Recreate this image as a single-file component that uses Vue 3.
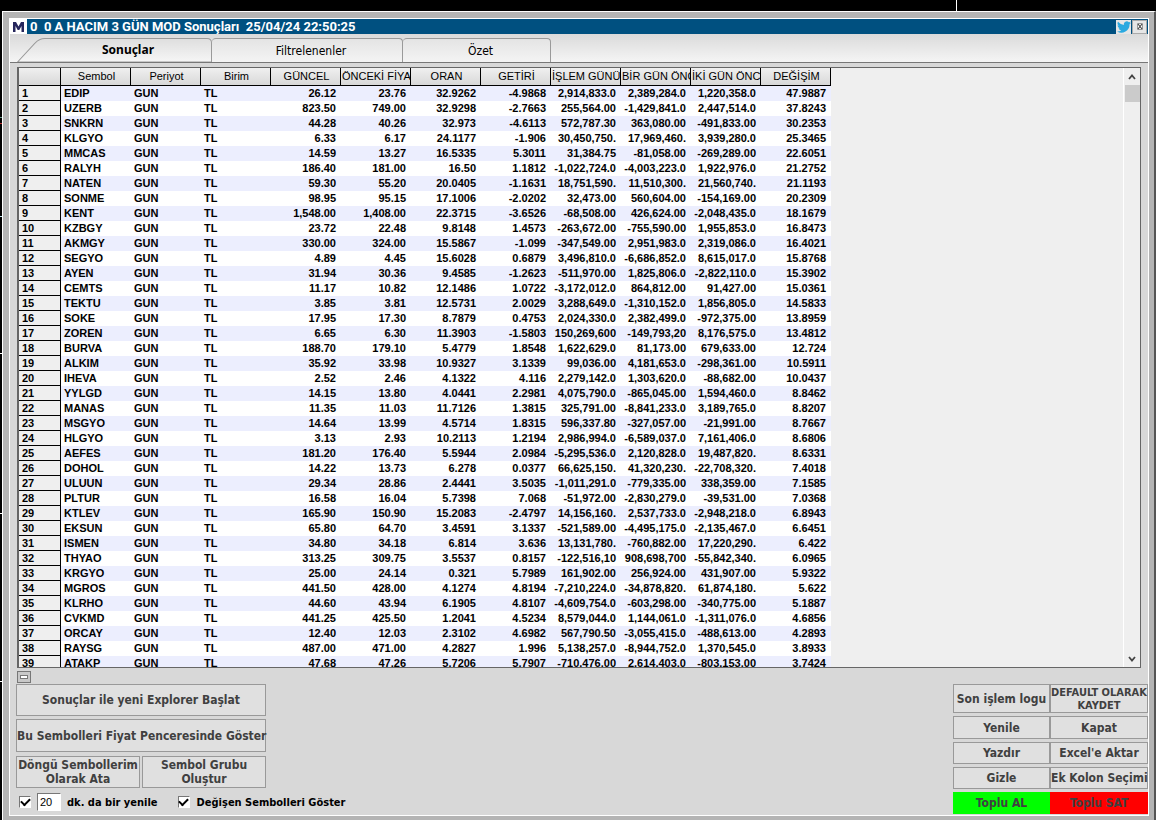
<script setup>
const tabs = ['Sonuçlar', 'Filtrelenenler', 'Özet']
const columns = ['Sembol', 'Periyot', 'Birim', 'GÜNCEL', 'ÖNCEKİ FİYA', 'ORAN', 'GETİRİ', 'İŞLEM GÜNÜ', 'BİR GÜN ÖNC', 'İKİ GÜN ÖNC', 'DEĞİŞİM']
const rows = `EDIP 26.12 23.76 32.9262 -4.9868 2,914,833.0 2,389,284.0 1,220,358.0 47.9887
UZERB 823.50 749.00 32.9298 -2.7663 255,564.00 -1,429,841.0 2,447,514.0 37.8243
SNKRN 44.28 40.26 32.973 -4.6113 572,787.30 363,080.00 -491,833.00 30.2353
KLGYO 6.33 6.17 24.1177 -1.906 30,450,750. 17,969,460. 3,939,280.0 25.3465
MMCAS 14.59 13.27 16.5335 5.3011 31,384.75 -81,058.00 -269,289.00 22.6051
RALYH 186.40 181.00 16.50 1.1812 -1,022,724.0 -4,003,223.0 1,922,976.0 21.2752
NATEN 59.30 55.20 20.0405 -1.1631 18,751,590. 11,510,300. 21,560,740. 21.1193
SONME 98.95 95.15 17.1006 -2.0202 32,473.00 560,604.00 -154,169.00 20.2309
KENT 1,548.00 1,408.00 22.3715 -3.6526 -68,508.00 426,624.00 -2,048,435.0 18.1679
KZBGY 23.72 22.48 9.8148 1.4573 -263,672.00 -755,590.00 1,955,853.0 16.8473
AKMGY 330.00 324.00 15.5867 -1.099 -347,549.00 2,951,983.0 2,319,086.0 16.4021
SEGYO 4.89 4.45 15.6028 0.6879 3,496,810.0 -6,686,852.0 8,615,017.0 15.8768
AYEN 31.94 30.36 9.4585 -1.2623 -511,970.00 1,825,806.0 -2,822,110.0 15.3902
CEMTS 11.17 10.82 12.1486 1.0722 -3,172,012.0 864,812.00 91,427.00 15.0361
TEKTU 3.85 3.81 12.5731 2.0029 3,288,649.0 -1,310,152.0 1,856,805.0 14.5833
SOKE 17.95 17.30 8.7879 0.4753 2,024,330.0 2,382,499.0 -972,375.00 13.8959
ZOREN 6.65 6.30 11.3903 -1.5803 150,269,600 -149,793,20 8,176,575.0 13.4812
BURVA 188.70 179.10 5.4779 1.8548 1,622,629.0 81,173.00 679,633.00 12.724
ALKIM 35.92 33.98 10.9327 3.1339 99,036.00 4,181,653.0 -298,361.00 10.5911
IHEVA 2.52 2.46 4.1322 4.116 2,279,142.0 1,303,620.0 -88,682.00 10.0437
YYLGD 14.15 13.80 4.0441 2.2981 4,075,790.0 -865,045.00 1,594,460.0 8.8462
MANAS 11.35 11.03 11.7126 1.3815 325,791.00 -8,841,233.0 3,189,765.0 8.8207
MSGYO 14.64 13.99 4.5714 1.8315 596,337.80 -327,057.00 -21,991.00 8.7667
HLGYO 3.13 2.93 10.2113 1.2194 2,986,994.0 -6,589,037.0 7,161,406.0 8.6806
AEFES 181.20 176.40 5.5944 2.0984 -5,295,536.0 2,120,828.0 19,487,820. 8.6331
DOHOL 14.22 13.73 6.278 0.0377 66,625,150. 41,320,230. -22,708,320. 7.4018
ULUUN 29.34 28.86 2.4441 3.5035 -1,011,291.0 -779,335.00 338,359.00 7.1585
PLTUR 16.58 16.04 5.7398 7.068 -51,972.00 -2,830,279.0 -39,531.00 7.0368
KTLEV 165.90 150.90 15.2083 -2.4797 14,156,160. 2,537,733.0 -2,948,218.0 6.8943
EKSUN 65.80 64.70 3.4591 3.1337 -521,589.00 -4,495,175.0 -2,135,467.0 6.6451
ISMEN 34.80 34.18 6.814 3.636 13,131,780. -760,882.00 17,220,290. 6.422
THYAO 313.25 309.75 3.5537 0.8157 -122,516,10 908,698,700 -55,842,340. 6.0965
KRGYO 25.00 24.14 0.321 5.7989 161,902.00 256,924.00 431,907.00 5.9322
MGROS 441.50 428.00 4.1274 4.8194 -7,210,224.0 -34,878,820. 61,874,180. 5.622
KLRHO 44.60 43.94 6.1905 4.8107 -4,609,754.0 -603,298.00 -340,775.00 5.1887
CVKMD 441.25 425.50 1.2041 4.5234 8,579,044.0 1,144,061.0 -1,311,076.0 4.6856
ORCAY 12.40 12.03 2.3102 4.6982 567,790.50 -3,055,415.0 -488,613.00 4.2893
RAYSG 487.00 471.00 4.2827 1.996 5,138,257.0 -8,944,752.0 1,370,545.0 3.8933
ATAKP 47.68 47.26 5.7206 5.7907 -710,476.00 2,614,403.0 -803,153.00 3.7424`
  .split('\n')
  .map((line) => {
    const [symbol, ...values] = line.trim().split(' ')
    return [symbol, 'GUN', 'TL', ...values]
  })
</script>

<template>
  <div class="desktop">
    <div class="backdrop"></div>
    <div class="frame">
    <main class="window">
      <header class="titlebar">
        <svg width="17" height="15" viewBox="0 0 17 15"><rect width="17" height="15" fill="#fff" /><path d="M3 3h3l2.500 4.500L11 3h3v10h-2.500V7L9.300 11H7.700L5.500 7v6H3z" fill="#26265c" /></svg>
        <h1>0&nbsp; 0 A HACIM 3 GÜN MOD Sonuçları&nbsp; 25/04/24 22:50:25</h1>
        <button class="tool" aria-label="Twitter"><svg width="14" height="14" viewBox="0 0 24 24"><path fill="#2aa9e0" d="M24 4.600a10 10 0 0 1-2.800.8 5 5 0 0 0 2.200-2.700 10 10 0 0 1-3.100 1.200 4.900 4.900 0 0 0-8.400 4.500A14 14 0 0 1 1.700 3.200a4.900 4.900 0 0 0 1.500 6.500 5 5 0 0 1-2.200-.6 4.900 4.900 0 0 0 3.900 4.900 5 5 0 0 1-2.200.1 4.900 4.900 0 0 0 4.600 3.400A10 10 0 0 1 0 19.500 14 14 0 0 0 21.500 7.100 10 10 0 0 0 24 4.600z" /></svg></button>
        <button class="tool close" aria-label="Kapat"><svg width="6" height="7" viewBox="0 0 6 7"><path d="M.5.5h5v6h-5z" fill="#fff" stroke="#999" /><path d="M1 1l4 5M5 1L1 6" stroke="#444" stroke-width="1.200" /></svg></button>
      </header>

      <nav class="tabs">
        <button v-for="(tab, i) in tabs" :key="tab" class="tab" :class="{ active: i === 0 }">
          <svg v-if="i === 0" class="slant" viewBox="0 0 195 23" preserveAspectRatio="none"><path d="M.5 23L18 5Q22 .5 28 .5H190q4.500 0 4.500 4V23z" fill="url(#face)" stroke="#9a9a9a" /><defs><linearGradient id="face" x2="0" y2="1"><stop stop-color="#dedede" /><stop offset="1" stop-color="#f6f6f6" /></linearGradient></defs></svg>
          <span>{{ tab }}</span>
        </button>
      </nav>

      <section class="results">
        <div class="grid-area">
          <table>
            <colgroup><col class="index-col" /><col v-for="c in columns" :key="c" class="data-col" /></colgroup>
            <thead>
              <tr><th></th><th v-for="c in columns" :key="c" :class="{ long: c.length > 9 }">{{ c }}</th></tr>
            </thead>
            <tbody>
              <tr v-for="(row, i) in rows" :key="row[0]">
                <th scope="row">{{ i + 1 }}</th>
                <td v-for="(value, j) in row" :key="j" :class="{ num: j > 2 }">{{ value }}</td>
              </tr>
            </tbody>
          </table>
        </div>
        <div class="scrollbar">
          <button aria-label="Yukarı"><svg width="8" height="6" viewBox="0 0 8 6"><path d="M1 5l3-3.500L7 5" fill="none" stroke="#444" stroke-width="1.800" /></svg></button>
          <div class="thumb"></div>
          <button class="down" aria-label="Aşağı"><svg width="8" height="6" viewBox="0 0 8 6"><path d="M1 1l3 3.500L7 1" fill="none" stroke="#444" stroke-width="1.800" /></svg></button>
        </div>
      </section>

      <button class="collapse" aria-label="Daralt"><i></i></button>

      <footer class="controls">
        <div class="left">
          <button class="btn wide">Sonuçlar ile yeni Explorer Başlat</button>
          <button class="btn wide tall">Bu Sembolleri Fiyat Penceresinde Göster</button>
          <div class="pair">
            <button class="btn">Döngü Sembollerim<br />Olarak Ata</button>
            <button class="btn">Sembol Grubu<br />Oluştur</button>
          </div>
          <div class="options">
            <input id="auto" type="checkbox" checked aria-label="Otomatik yenile" />
            <input id="minutes" class="minutes" type="text" value="20" />
            <label class="minutes-label" for="minutes">dk. da bir yenile</label>
            <input id="changed" type="checkbox" checked />
            <label for="changed">Değişen Sembolleri Göster</label>
          </div>
        </div>
        <div class="right">
          <button class="btn">Son işlem logu</button><button class="btn small">DEFAULT OLARAK<br />KAYDET</button>
          <button class="btn">Yenile</button><button class="btn">Kapat</button>
          <button class="btn">Yazdır</button><button class="btn">Excel'e Aktar</button>
          <button class="btn">Gizle</button><button class="btn">Ek Kolon Seçimi</button>
          <button class="btn buy">Toplu AL</button><button class="btn sell">Toplu SAT</button>
        </div>
      </footer>
    </main>
    </div>
  </div>
</template>

<style>
body { background: #000; }
</style>

<style scoped>
* { box-sizing: border-box; }
button { font: inherit; color: inherit; padding: 0; margin: 0; border: 0; background: none; }
.desktop {
  display: flex;
  flex-direction: column;
  height: 100vh;
  padding-left: 2px;
  overflow: hidden;
  background:
    linear-gradient(#6a9a8a, #6a9a8a) 0 117px / 2px 1px no-repeat,
    linear-gradient(#c03030, #c03030) 0 123px / 2px 1px no-repeat,
    linear-gradient(#bde0e8, #bde0e8) 0 216px / 2px 1px no-repeat,
    linear-gradient(#fff, #fff) 0 353px / 2px 1px no-repeat,
    linear-gradient(#fff, #fff) 0 513px / 2px 1px no-repeat,
    linear-gradient(#fff, #fff) 0 681px / 2px 1px no-repeat,
    #000;
  font-family: "Liberation Sans", Arial, sans-serif;
}
.backdrop { flex: 0 0 11px; width: 955px; border-right: 1px solid #fff; }
.frame {
  flex: 1;
  min-height: 0;
  display: flex;
  border: solid #fff;
  border-width: 1px 2px 0 1px;
  border-right-color: #555;
}
.window {
  flex: 1;
  min-width: 0;
  display: flex;
  flex-direction: column;
  border: solid #b4b4b4;
  border-width: 6px 5px 4px 6px;
  box-shadow: inset 1px 1px #fff, inset -1px -1px #fff;
  background: #d8d8d8;
  padding: 1px;
}
.titlebar {
  display: flex;
  align-items: center;
  flex: 0 0 15px;
  background: #005080;
  color: #fff;
}
.titlebar h1 { flex: 1; margin: 0 0 0 3px; font-family: Roboto, sans-serif; font-size: 13px; line-height: 15px; font-weight: bold; white-space: nowrap; }
.tool { width: 15px; height: 14px; margin-right: 1px; background: #e6e6e6; display: grid; place-items: center; }
.close { border: 1px solid #aaa; }
.tabs {
  display: flex;
  flex: 0 0 29px;
  align-items: flex-end;
  padding-left: 7px;
  border-bottom: 1px solid #777;
  background: linear-gradient(#dadada, #f5f5f5);
}
.tab {
  position: relative;
  flex: 0 1 auto;
  width: 191px;
  height: 24px;
  padding-left: 8px;
  font-family: "DejaVu Sans Condensed", sans-serif;
  font-size: 12px;
  line-height: 22px;
  border: 1px solid #9a9a9a;
  border-left: 0;
  border-bottom: 0;
  border-radius: 4px 4px 0 0;
  background: linear-gradient(#e4e4e4, #f4f4f4);
}
.tab:last-child { width: 148px; }
.tab.active { width: 195px; border: 0; background: none; font-family: "Noto Sans", sans-serif; font-weight: bold; padding-left: 27px; }
.slant { position: absolute; inset: 0; width: 100%; height: 100%; }
.tab span { position: relative; }
.results {
  flex: 1;
  min-height: 0;
  display: flex;
  margin: 4px 7px 0;
  border: 1px solid #666;
  border-left-width: 2px;
  background: #efefef;
}
.grid-area { flex: 1; min-width: 0; overflow: hidden; }
table { border-collapse: separate; border-spacing: 0; table-layout: fixed; width: 812px; font-size: 11px; font-weight: bold; color: #000; }
.index-col { width: 42px; }
.data-col { width: 70px; }
th, td { padding: 0; overflow: hidden; white-space: nowrap; }
thead th {
  height: 18px;
  line-height: 17px;
  padding-left: 2px;
  font-weight: normal;
  text-align: center;
  border-right: 1px solid #000;
  border-bottom: 1px solid #000;
  background: linear-gradient(#f0f0f0, #d8d8d8);
}
thead th.long { text-align: left; padding-left: 1px; }
tbody th { height: 15px; line-height: 14px; text-align: left; padding-left: 3px; border-right: 1px solid #000; border-bottom: 1px solid #000; background: #efefef; }
td { height: 15px; line-height: 15px; padding: 0 5px 0 3px; background: #fff; }
tbody tr:nth-child(odd) td { background: #eceefe; }
.num { text-align: right; padding-left: 0; }
.scrollbar { flex: 0 0 17px; display: flex; flex-direction: column; align-items: center; border-left: 1px solid #fff; }
.scrollbar button { height: 17px; display: grid; place-items: center; }
.thumb { width: 15px; height: 17px; background: #cbcbcb; }
.scrollbar .down { margin-top: auto; }
.collapse { flex: 0 0 12px; width: 14px; margin: 3px 0 1px 7px; border: 1px solid #777; display: grid; place-items: center; background: #c8c8c8; }
.collapse i { width: 8px; height: 4px; border: 1px solid #777; background: #fff; }
.controls { display: flex; justify-content: space-between; padding-left: 6px; flex: 0 0 131px; font-family: "DejaVu Sans Condensed", sans-serif; }
.left { width: 250px; }
.btn {
  font-size: 12px;
  line-height: 14px;
  font-weight: bold;
  color: #404040;
  border: 1px solid #999;
  background: #e0e0e0;
  white-space: nowrap;
}
.wide { display: block; width: 100%; height: 32px; }
.tall { height: 33px; margin: 3px 0 4px; }
.pair { display: grid; grid-template-columns: 1fr 1fr; gap: 2px; height: 32px; }
.options { display: flex; align-items: center; width: 340px; height: 22px; margin-top: 3px; padding-left: 3px; font-size: 11px; font-weight: bold; white-space: nowrap; }
input { margin: 0; }
input[type="checkbox"] { appearance: none; width: 12px; height: 12px; border: 1px solid; border-color: #777 #fff #fff #777; background: #fff; display: grid; place-items: center; }
input[type="checkbox"]:checked::after { content: ""; width: 7px; height: 4px; border: solid #000; border-width: 0 0 2px 2px; transform: rotate(-45deg); margin-bottom: 2px; }
.minutes { width: 24px; height: 18px; margin: 0 6px; padding: 0 2px; border: 1px solid; border-color: #777 #fff #fff #777; font: 11px "Liberation Sans", sans-serif; }
.minutes-label { margin-right: 20px; }
#changed + label { margin-left: 7px; }
.right { display: grid; grid-template-columns: 97px 98px; grid-template-rows: 29px 23px 22px 22px 22px; row-gap: 3px; align-content: start; }
.right .btn.small { font-size: 11px; line-height: 13px; }
.right .btn.buy { background: #00ff00; border-color: #00ff00; }
.right .btn.sell { background: #ff0000; border-color: #ff0000; }
</style>
